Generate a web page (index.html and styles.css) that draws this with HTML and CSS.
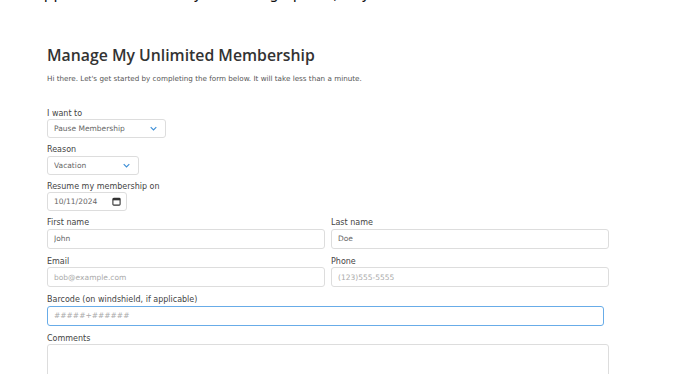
FILE: index.html
```html
<!DOCTYPE html>
<html lang="en">
<head>
  <meta charset="UTF-8">
  <title>Manage My Unlimited Membership</title>
  <link rel="stylesheet" href="styles.css">
</head>
<body>

  <div class="topline">The app is the easiest way to manage plans, anytime.</div>

  <div class="page">
    <h1>Manage My Unlimited Membership</h1>
    <p class="intro">Hi there. Let's get started by completing the form below. It will take less than a minute.</p>

    <form class="form">
      <div class="field">
        <label for="action">I want to</label>
        <div class="select-wrap wide">
          <select id="action">
            <option>Pause Membership</option>
            <option>Cancel Membership</option>
          </select>
          <svg class="chevron" viewBox="0 0 10 6"><path d="M1 1l4 4 4-4" fill="none" stroke="#3d8fd6" stroke-width="1.6"/></svg>
        </div>
      </div>

      <div class="field">
        <label for="reason">Reason</label>
        <div class="select-wrap">
          <select id="reason">
            <option>Vacation</option>
            <option>Other</option>
          </select>
          <svg class="chevron" viewBox="0 0 10 6"><path d="M1 1l4 4 4-4" fill="none" stroke="#3d8fd6" stroke-width="1.6"/></svg>
        </div>
      </div>

      <div class="field">
        <label for="resume">Resume my membership on</label>
        <div class="date-wrap">
          <input type="text" id="resume" value="10/11/2024">
          <svg class="calendar" viewBox="0 0 10 10"><rect x="1" y="1.5" width="8" height="7.5" rx="1" fill="none" stroke="#333" stroke-width="1.2"/><rect x="1" y="1.5" width="8" height="2.2" fill="#333"/></svg>
        </div>
      </div>

      <div class="row">
        <div class="field tall">
          <label for="first">First name</label>
          <input type="text" id="first" value="John">
        </div>
        <div class="field tall">
          <label for="last">Last name</label>
          <input type="text" id="last" value="Doe">
        </div>
      </div>

      <div class="row">
        <div class="field tall">
          <label for="email">Email</label>
          <input type="email" id="email" placeholder="bob@example.com">
        </div>
        <div class="field tall">
          <label for="phone">Phone</label>
          <input type="tel" id="phone" placeholder="(123)555-5555">
        </div>
      </div>

      <div class="field tall barcode">
        <label for="barcode">Barcode (on windshield, if applicable)</label>
        <input type="text" id="barcode" class="focused" placeholder="#####+######" autofocus>
      </div>

      <div class="field">
        <label for="comments">Comments</label>
        <textarea id="comments" rows="4"></textarea>
      </div>
    </form>
  </div>

</body>
</html>
```

FILE: styles.css
```css
body {
  margin: 0;
  font-family: 'DejaVu Sans', sans-serif;
  background: #fff;
  color: #333;
  overflow: hidden;
}

.topline {
  margin-top: -14.5px;
  padding-left: 2px;
  font-size: 15px;
  line-height: 17px;
  color: #111;
  white-space: nowrap;
}

.page {
  width: 562px;
  padding-left: 47px;
}

h1 {
  margin: 42.5px 0 0;
  font-family: 'Open Sans', sans-serif;
  font-size: 15.8px;
  font-weight: 600;
  line-height: 20px;
  color: #333;
}

.intro {
  margin: 8.5px 0 0;
  font-size: 7.2px;
  line-height: 10px;
  color: #555;
}

.form {
  margin-top: 24px;
}

.field {
  display: flex;
  flex-direction: column;
  margin-bottom: 6px;
}

.field.tall {
  margin-bottom: 7px;
}

label {
  font-size: 8px;
  line-height: 11px;
  color: #444;
  margin-bottom: 0.5px;
}

input,
select,
textarea {
  display: block;
  font-family: 'DejaVu Sans', sans-serif;
  font-size: 7.5px;
  color: #666;
  height: 19px;
  box-sizing: border-box;
  border: 1px solid #ddd;
  border-radius: 3px;
  padding: 0 6px;
  background: #fff;
  outline: none;
}

input::placeholder {
  color: #aaa;
}

.tall input {
  height: 20px;
}

.select-wrap,
.date-wrap {
  position: relative;
  width: 92px;
}

.select-wrap.wide {
  width: 119px;
}

.date-wrap {
  width: 80px;
}

.select-wrap select,
.date-wrap input {
  width: 100%;
  appearance: none;
  -webkit-appearance: none;
}

.chevron {
  position: absolute;
  right: 9px;
  top: 7px;
  width: 7px;
  height: 5px;
}

.calendar {
  position: absolute;
  right: 6px;
  top: 5px;
  width: 9px;
  height: 9px;
}

.row {
  display: grid;
  grid-template-columns: 1fr 1fr;
  gap: 6px;
}

.barcode input {
  width: 557px;
}

.focused {
  border-color: #68ace8;
}

textarea {
  height: 60px;
  resize: none;
}
```
